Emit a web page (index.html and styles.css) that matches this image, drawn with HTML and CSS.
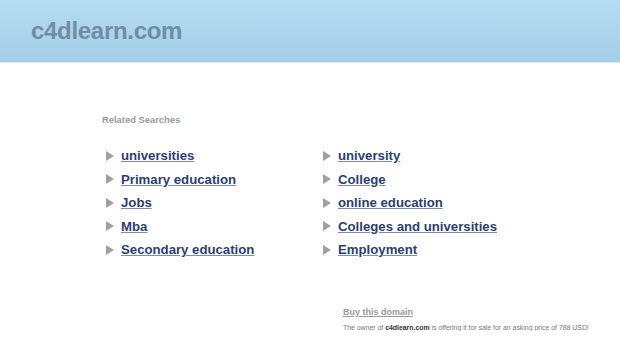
FILE: index.html
```html
<!DOCTYPE html>
<html>
<head>
<meta charset="utf-8">
<link rel="stylesheet" href="styles.css">
</head>
<body>
<div class="header"><div class="logo">c4dlearn.com</div></div>
<div class="main">
  <div class="related">Related Searches</div>
  <div class="cols">
    <ul class="col">
      <li><span class="tri"></span><a href="#">universities</a></li>
      <li><span class="tri"></span><a href="#">Primary education</a></li>
      <li><span class="tri"></span><a href="#">Jobs</a></li>
      <li><span class="tri"></span><a href="#">Mba</a></li>
      <li><span class="tri"></span><a href="#">Secondary education</a></li>
    </ul>
    <ul class="col">
      <li><span class="tri"></span><a href="#">university</a></li>
      <li><span class="tri"></span><a href="#">College</a></li>
      <li><span class="tri"></span><a href="#">online education</a></li>
      <li><span class="tri"></span><a href="#">Colleges and universities</a></li>
      <li><span class="tri"></span><a href="#">Employment</a></li>
    </ul>
  </div>
  <div class="sale">
    <a class="buy" href="#">Buy this domain</a>
    <div class="owner">The owner of <b>c4dlearn.com</b> is offering it for sale for an asking price of 788 USD!</div>
  </div>
</div>
</body>
</html>
```
FILE: styles.css
```css
body {
  margin: 0;
  font-family: "Liberation Sans", Arial, sans-serif;
  background: #fff;
}
.header {
  height: 62px;
  background: linear-gradient(#b5dcf2, #a5cde6);
  border-bottom: 1px solid #d6ecf8;
}
.logo {
  padding: 17px 0 0 31px;
  font-size: 24px;
  font-weight: bold;
  color: #6e8ea4;
  letter-spacing: -0.3px;
}
.main {
  padding-left: 102px;
}
.related {
  margin-top: 51px;
  font-size: 9.4px;
  font-weight: bold;
  color: #9a9a9a;
}
.cols {
  display: flex;
  margin-top: 19px;
}
.col {
  list-style: none;
  margin: 0;
  padding: 0;
  width: 217px;
}
.col li {
  display: flex;
  align-items: center;
  height: 23.5px;
}
.tri {
  width: 0;
  height: 0;
  margin-left: 4px;
  margin-right: 7px;
  border-top: 5px solid transparent;
  border-bottom: 5px solid transparent;
  border-left: 8px solid #a0a0a0;
}
.col a {
  font-size: 13.2px;
  font-weight: bold;
  color: #2b3f73;
  text-decoration: underline;
  text-decoration-color: #7d8bb0;
}
.sale {
  margin-top: 45px;
  margin-left: 241px;
}
.buy {
  display: block;
  font-size: 9px;
  font-weight: bold;
  color: #9a9a9a;
  text-decoration: underline;
}
.owner {
  margin-top: 7px;
  font-size: 6.9px;
  color: #777;
  white-space: nowrap;
}
.owner b {
  color: #333;
}
```
